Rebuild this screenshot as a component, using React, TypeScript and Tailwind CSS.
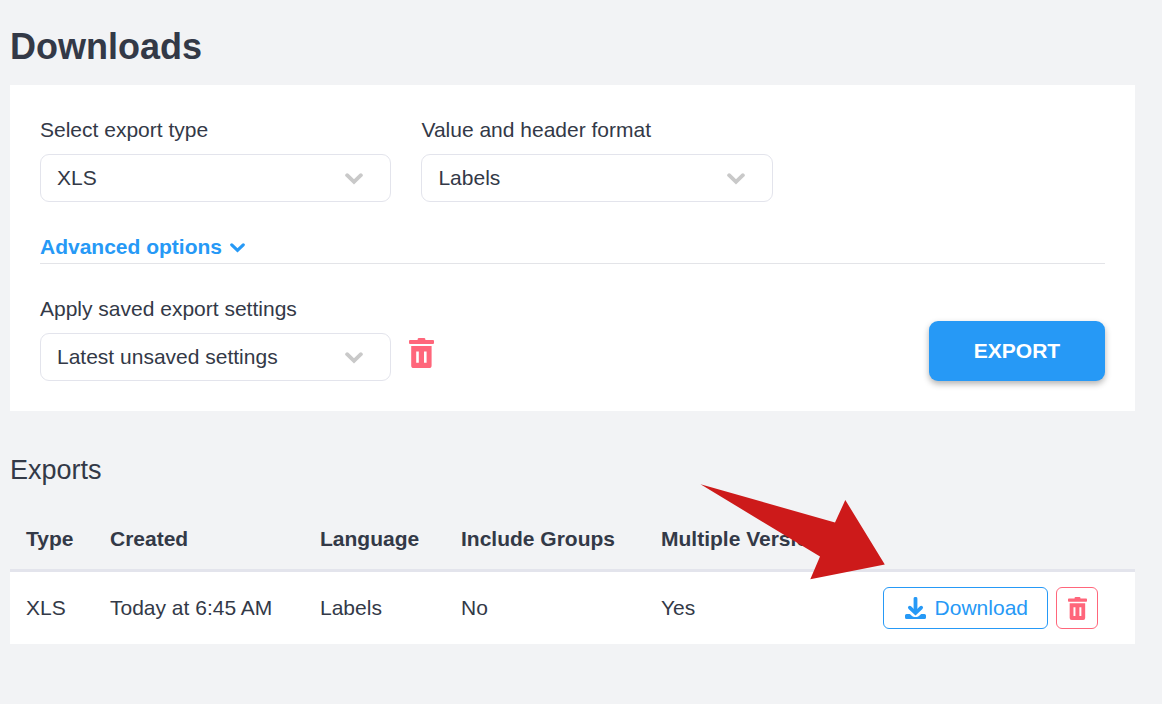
import { ReactNode } from "react";

function TrashIcon({ className }: { className: string }) {
  return (
    <svg viewBox="0 0 25 30" fill="currentColor" className={className} aria-hidden="true">
      <path d="M10 0H15Q16.4 0 16.4 1.4V2H24Q25 2 25 3V5Q25 6 24 6H1Q0 6 0 5V3Q0 2 1 2H8.6V1.4Q8.6 0 10 0Z" />
      <path
        fillRule="evenodd"
        d="M2.2 8H22.6V27.4Q22.6 30 20 30H4.8Q2.2 30 2.2 27.4ZM7.2 13.4V24.8H9.8V13.4ZM15 13.4V24.8H17.6V13.4Z"
      />
    </svg>
  );
}

function DownloadIcon({ className }: { className: string }) {
  return (
    <svg viewBox="0 0 21 22" fill="none" stroke="currentColor" className={className} aria-hidden="true">
      <path d="M10.5 1.8V14" strokeWidth="3.8" strokeLinecap="round" />
      <path d="M4.8 10.6L10.5 16L16.2 10.6" strokeWidth="3.6" strokeLinecap="round" />
      <path
        stroke="none"
        fill="currentColor"
        d="M1.6 17H4C5 17 5.6 17.6 6.4 18.4C8.8 20.6 12.2 20.6 14.6 18.4C15.4 17.6 16 17 17 17H19.4Q21 17 21 18.6V20.4Q21 22 19.4 22H1.6Q0 22 0 20.4V18.6Q0 17 1.6 17Z"
      />
    </svg>
  );
}

function Chevron({ className }: { className: string }) {
  return (
    <svg
      viewBox="0 0 18 12"
      fill="none"
      stroke="currentColor"
      strokeWidth="3.8"
      strokeLinecap="round"
      className={className}
      aria-hidden="true"
    >
      <path d="M2.1 2.2L9 8.9L15.9 2.2" />
    </svg>
  );
}

function SelectField({ id, label, value, children }: { id: string; label: string; value: string; children?: ReactNode }) {
  return (
    <div className="w-[33%]">
      <label htmlFor={id} className="mb-2.5 block leading-7 whitespace-nowrap">
        {label}
      </label>
      <div className="grid items-center">
        <select
          id={id}
          className="col-start-1 row-start-1 h-12 w-full appearance-none rounded-[9px] border border-[#e3e4ec] bg-white pr-12 pl-4"
        >
          <option>{value}</option>
          {children}
        </select>
        <Chevron className="pointer-events-none col-start-1 row-start-1 mt-0.5 mr-7 h-3 w-[18px] justify-self-end text-[#c9c9c9]" />
      </div>
    </div>
  );
}

export default function App() {
  return (
    <main className="min-h-screen bg-[#f2f3f5] pt-[23px] pr-[27px] pb-[60px] pl-2.5 font-['Liberation_Sans',Arial,sans-serif] text-[21px] text-[#333947]">
      <h1 className="mb-3.5 text-4xl leading-[48px] font-bold">Downloads</h1>

      <form className="bg-white px-[30px] pt-[31px] pb-[30px]" onSubmit={(e) => e.preventDefault()}>
        <div className="flex gap-[30px]">
          <SelectField id="type" label="Select export type" value="XLS" />
          <SelectField id="format" label="Value and header format" value="Labels" />
        </div>

        <div className="mt-[30px] mb-[31px] border-b border-[#e3e4e8] pb-0.5">
          <button type="button" className="flex h-[29px] items-center gap-2 font-bold text-[#2699f6]">
            Advanced options
            <Chevron className="mt-0.5 h-[10px] w-[15px]" />
          </button>
        </div>

        <div className="flex items-end">
          <SelectField id="saved" label="Apply saved export settings" value="Latest unsaved settings" />
          <button type="button" aria-label="Delete saved settings" className="mb-[13px] ml-[18px] text-[#ff667b]">
            <TrashIcon className="h-[30px] w-[25px]" />
          </button>
          <button
            type="submit"
            className="ml-auto h-[60px] w-44 rounded-[9px] bg-[#2699f6] font-bold text-white shadow-[0_3px_6px_rgba(0,0,0,0.3)]"
          >
            EXPORT
          </button>
        </div>
      </form>

      <section className="relative pt-[39px]">
        <h2 className="mb-[18px] text-[27px] leading-10">Exports</h2>
        <table className="w-full table-fixed border-separate border-spacing-0 text-left whitespace-nowrap">
          <colgroup>
            <col className="w-[84px]" />
            <col className="w-[210px]" />
            <col className="w-[141px]" />
            <col className="w-[200px]" />
            <col />
            <col className="w-[268px]" />
          </colgroup>
          <thead>
            <tr className="h-16 *:border-b-3 *:border-[#e3e4ec]">
              <th className="px-4">Type</th>
              <th className="px-4">Created</th>
              <th className="px-4">Language</th>
              <th className="px-4">Include Groups</th>
              <th className="px-4">Multiple Versions</th>
              <td />
            </tr>
          </thead>
          <tbody>
            <tr className="h-[72px] bg-white">
              <td className="px-4">XLS</td>
              <td className="px-4">Today at 6:45 AM</td>
              <td className="px-4">Labels</td>
              <td className="px-4">No</td>
              <td className="px-4">Yes</td>
              <td className="pr-[37px]">
                <div className="flex justify-end gap-2">
                  <button
                    type="button"
                    className="flex h-[42px] items-center gap-[9px] rounded-md border border-[#2699f6] pr-[19px] pl-[21px] text-[#2699f6]"
                  >
                    <DownloadIcon className="h-[22px] w-[21px]" />
                    Download
                  </button>
                  <button
                    type="button"
                    aria-label="Delete export"
                    className="flex h-[42px] w-[42px] items-center justify-center rounded-md border border-[#ff667b] text-[#ff667b]"
                  >
                    <TrashIcon className="h-[23px] w-[19px]" />
                  </button>
                </div>
              </td>
            </tr>
          </tbody>
        </table>
        <svg
          viewBox="0 0 185 96"
          fill="#cd1a1a"
          className="pointer-events-none absolute top-[73px] right-[250px] h-24 w-[185px]"
          aria-hidden="true"
        >
          <path d="M0.5 0.3L135 38.5L145.3 16L184.8 80.5L110.3 95.2L120 72.5Z" />
        </svg>
      </section>
    </main>
  );
}
